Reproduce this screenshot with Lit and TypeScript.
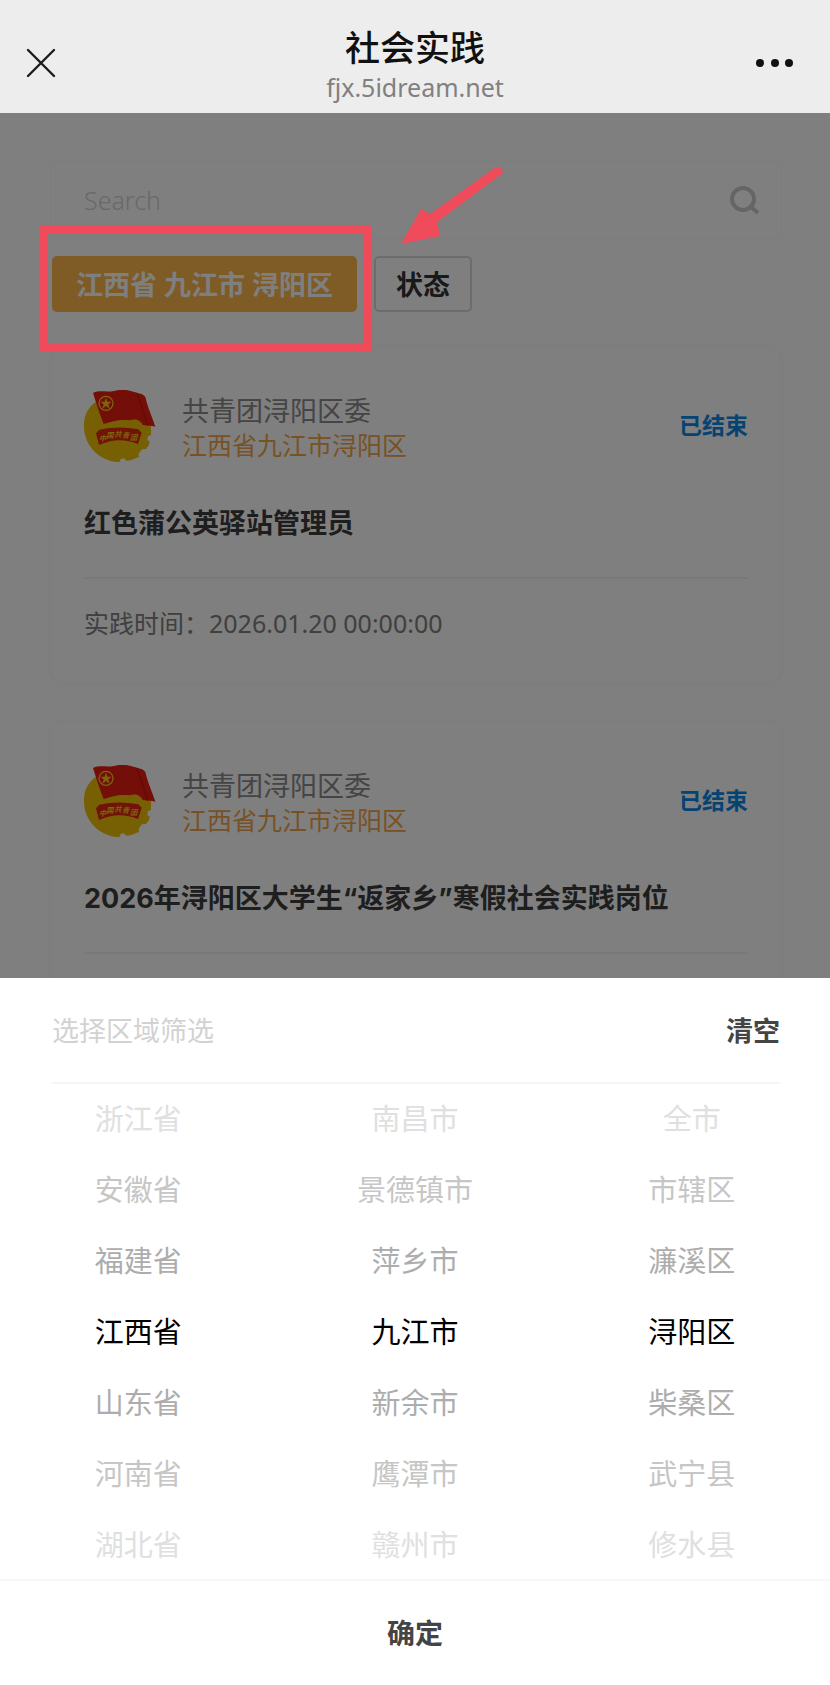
import { css, html, LitElement, nothing } from "lit";
import { customElement, property, state } from "lit/decorators.js";

const fontStack = css`"Noto Sans", "Noto Sans CJK SC", sans-serif`;

interface Practice {
    org: string;
    region: string;
    status: string;
    title: string;
    time?: string;
}

const practices: Practice[] = [
    {
        org: "共青团浔阳区委",
        region: "江西省九江市浔阳区",
        status: "已结束",
        title: "红色蒲公英驿站管理员",
        time: "2026.01.20 00:00:00",
    },
    {
        org: "共青团浔阳区委",
        region: "江西省九江市浔阳区",
        status: "已结束",
        title: "2026年浔阳区大学生“返家乡”寒假社会实践岗位",
    },
];

const columns = [
    {
        label: "省",
        items: ["浙江省", "安徽省", "福建省", "江西省", "山东省", "河南省", "湖北省"],
    },
    {
        label: "市",
        items: ["南昌市", "景德镇市", "萍乡市", "九江市", "新余市", "鹰潭市", "赣州市"],
    },
    {
        label: "区",
        items: ["全市", "市辖区", "濂溪区", "浔阳区", "柴桑区", "武宁县", "修水县"],
    },
];

@customElement("league-emblem")
export class LeagueEmblem extends LitElement {
    static styles = css`
        :host {
            display: block;
            width: 72px;
            height: 72px;
            flex: none;
        }

        .emblem {
            display: block;
            width: 100%;
            height: 100%;
        }

        .ribbon {
            font: italic bold 22px "Noto Sans CJK SC", sans-serif;
            fill: #f6c81c;
        }
    `;

    render() {
        return html`<svg class="emblem" viewBox="42 45 216 216" aria-hidden="true">
            <path
                d="M76 82 C50 100 40 130 42 158 C44 212 88 258 143 261 L150 260 L151 252 L163 250 L168 257 L182 256 L207 246 L206 236 L216 223 L228 222 L237 210 L239 199 L232 196 L234 184 L243 180 L243 152 L200 90 Z"
                fill="#efc008"
            />
            <path
                d="M69 54 C90 44 108 53 132 48 C158 40 178 46 196 52 C210 58 216 54 226 66 C234 100 246 124 256 155 C242 150 232 154 218 150 C208 130 192 132 178 136 C150 132 128 138 101 147 C94 130 86 108 69 54 Z"
                fill="#e81c10"
            />
            <path
                d="M200 54 C214 90 224 126 234 152"
                fill="none"
                stroke="#c91509"
                stroke-width="4"
            />
            <circle cx="108" cy="85" r="21" fill="none" stroke="#f6c81c" stroke-width="4" />
            <path
                d="M108 68 L112 80 L125 80 L115 88 L119 101 L108 93 L97 101 L101 88 L91 80 L104 80 Z"
                fill="#f6c81c"
            />
            <path
                d="M78 175 L88 164 Q145 151 205 163 L215 173 L204 207 Q145 183 87 210 Z"
                fill="#e3260f"
            />
            <text class="ribbon" x="87 109 133 156 180" y="198 190 187 189 195">中国共青团</text>
        </svg>`;
    }
}

@customElement("practice-card")
export class PracticeCard extends LitElement {
    static styles = css`
        :host {
            display: block;
            box-sizing: border-box;
            min-height: 338px;
            padding: 43px 33px 41px;
            border: 1px solid #fbfbfb;
            border-radius: 16px;
            box-shadow: 0 0 8px rgba(0, 0, 0, 0.03);
            background: #fff;
        }

        .head {
            display: flex;
            align-items: center;
            gap: 26px;
        }

        .names {
            flex: 1;
            padding-top: 4px;
            line-height: 34px;
        }

        .org {
            font-size: 27px;
            color: #8a8a8a;
        }

        .region {
            font-size: 25px;
            color: #f0a548;
        }

        .status {
            padding-bottom: 4px;
            font-size: 23px;
            font-weight: 700;
            color: #0a86e6;
        }

        .title {
            margin: 44px 0 0;
            padding-bottom: 35px;
            border-bottom: 2px solid #f2f2f2;
            font-family: Inter, "Noto Sans CJK SC", sans-serif;
            font-size: 27px;
            font-weight: 700;
            line-height: 36px;
            color: #3c3c3c;
        }

        .time {
            margin: 26px 0 0;
            font-size: 25px;
            line-height: 36px;
            color: #808080;
        }
    `;

    @property({ attribute: false }) practice!: Practice;

    render() {
        const { org, region, status, title, time } = this.practice;
        return html`
            <div class="head">
                <league-emblem></league-emblem>
                <div class="names">
                    <div class="org">${org}</div>
                    <div class="region">${region}</div>
                </div>
                <span class="status">${status}</span>
            </div>
            <h2 class="title">${title}</h2>
            ${time ? html`<p class="time">实践时间：${time}</p>` : nothing}
        `;
    }
}

@customElement("region-picker")
export class RegionPicker extends LitElement {
    static styles = css`
        :host {
            display: block;
            background: #fff;
        }

        button {
            padding: 0;
            border: 0;
            background: none;
            font-family: inherit;
            cursor: pointer;
        }

        .head {
            display: flex;
            align-items: center;
            justify-content: space-between;
            box-sizing: border-box;
            height: 106px;
            margin: 0 50px 0 52px;
            padding-bottom: 2px;
            border-bottom: 2px solid #f5f5f5;
            font-size: 27px;
            color: #d2d2d2;
        }

        .clear {
            font-size: 27px;
            font-weight: 700;
            color: #444;
        }

        .columns {
            display: grid;
            grid-template-columns: repeat(3, 1fr);
            height: 495px;
            overflow: hidden;
            align-content: center;
            border-bottom: 2px solid #f7f7f7;
        }

        .column {
            margin: 0;
            padding: 0;
            list-style: none;
        }

        .item {
            display: block;
            width: 100%;
            height: 71px;
            padding-bottom: 4px;
            font-size: 29px;
            color: #000;
        }

        .far-1 {
            color: #adadad;
        }

        .far-2 {
            color: #c6c6c6;
        }

        .far-3 {
            color: #e0e0e0;
        }

        .confirm {
            display: block;
            width: 100%;
            height: 104px;
            padding-bottom: 3px;
            font-size: 28px;
            font-weight: 700;
            color: #444;
        }
    `;

    @state() private selected = [3, 3, 3];

    private select(column: number, index: number) {
        this.selected = this.selected.map((old, i) => (i === column ? index : old));
    }

    render() {
        return html`
            <div class="head">
                <span>选择区域筛选</span>
                <button class="clear" type="button">清空</button>
            </div>
            <div class="columns">
                ${columns.map(
                    (column, c) => html`
                        <ul class="column" aria-label=${column.label}>
                            ${column.items.map(
                                (item, i) => html`<li>
                                    <button
                                        type="button"
                                        class="item far-${Math.min(3, Math.abs(i - this.selected[c]))}"
                                        aria-pressed=${i === this.selected[c]}
                                        @click=${() => this.select(c, i)}
                                    >
                                        ${item}
                                    </button>
                                </li>`,
                            )}
                        </ul>
                    `,
                )}
            </div>
            <button class="confirm" type="button">确定</button>
        `;
    }
}

@customElement("app-root")
export class AppRoot extends LitElement {
    static styles = css`
        :host {
            display: flex;
            flex-direction: column;
            height: 100vh;
            font-family: ${fontStack};
            background: #fff;
        }

        button {
            font-family: inherit;
            cursor: pointer;
        }

        .bar {
            display: grid;
            grid-template-columns: 1fr auto 1fr;
            align-items: center;
            flex: none;
            height: 113px;
            padding: 13px 26px 0;
            box-sizing: border-box;
            background: #ededed;
        }

        .bar-button {
            display: flex;
            padding: 0;
            border: 0;
            background: none;
        }

        .bar-button:last-child {
            justify-self: end;
            margin-right: 10px;
        }

        .heading {
            padding-top: 4px;
            text-align: center;
        }

        .heading h1 {
            margin: 0;
            font-size: 35px;
            font-weight: 500;
            line-height: 44px;
            color: #111;
        }

        .heading p {
            margin: 0;
            font-size: 25px;
            line-height: 34px;
            color: #808080;
        }

        .page {
            position: relative;
            flex: 1;
            min-height: 0;
            padding: 48px 48px 0 50px;
            overflow: hidden;
        }

        .shade {
            position: absolute;
            inset: 0;
            z-index: 1;
            background: rgba(0, 0, 0, 0.5);
        }

        .search {
            display: flex;
            align-items: center;
            height: 78px;
            padding: 0 21px 0 33px;
            box-sizing: border-box;
            border: 1px solid #f8f8f8;
            border-radius: 4px;
        }

        .search input {
            flex: 1;
            min-width: 0;
            padding: 0;
            border: 0;
            outline: 0;
            background: none;
            font: 300 25px ${fontStack};
        }

        .search input::placeholder {
            color: #d2d2d2;
            opacity: 1;
        }

        .filters {
            display: flex;
            gap: 17px;
            margin: 17px 0 34px 2px;
        }

        .marked {
            position: relative;
        }

        .chip {
            display: block;
            height: 56px;
            padding: 0 20px 2px;
            border: 2px solid #d9d9d9;
            border-radius: 5px;
            background: #fff;
            font-size: 27px;
            font-weight: 700;
            color: #333;
        }

        .chip.active {
            padding: 0 22px 2px;
            border-color: #feb64c;
            background: #feb64c;
            color: #fff;
        }

        .frame {
            position: absolute;
            inset: -31px -15px -40px -12px;
            z-index: 2;
            border: 8px solid #f04b5b;
            pointer-events: none;
        }

        .arrow {
            position: absolute;
            top: -92px;
            left: 349px;
            z-index: 2;
            pointer-events: none;
        }

        .cards {
            display: grid;
            gap: 37px;
        }
    `;

    render() {
        return html`
            <header class="bar">
                <button class="bar-button" type="button" aria-label="关闭">
                    <svg width="30" height="30" viewBox="0 0 30 30" aria-hidden="true">
                        <path
                            d="M2 2 L28 28 M28 2 L2 28"
                            stroke="#1c1c1c"
                            stroke-width="2.4"
                            stroke-linecap="round"
                        />
                    </svg>
                </button>
                <div class="heading">
                    <h1>社会实践</h1>
                    <p>fjx.5idream.net</p>
                </div>
                <button class="bar-button" type="button" aria-label="更多">
                    <svg width="38" height="10" viewBox="0 0 38 10" aria-hidden="true">
                        <circle cx="4" cy="5" r="4" fill="#111" />
                        <circle cx="19" cy="5" r="4" fill="#111" />
                        <circle cx="33" cy="5" r="4" fill="#111" />
                    </svg>
                </button>
            </header>
            <main class="page">
                <label class="search">
                    <input type="text" placeholder="Search" aria-label="Search" />
                    <svg width="30" height="30" viewBox="0 0 30 30" fill="none" aria-hidden="true">
                        <circle cx="13" cy="14" r="11" stroke="#cacaca" stroke-width="4" />
                        <path d="M20 21 L28 28" stroke="#cacaca" stroke-width="4" />
                    </svg>
                </label>
                <div class="filters">
                    <div class="marked">
                        <button class="chip active" type="button">江西省 九江市 浔阳区</button>
                        <div class="frame"></div>
                        <svg class="arrow" width="104" height="82" viewBox="0 0 104 82" aria-hidden="true">
                            <path
                                d="M95 3 Q101 2 102 9 L36 58 L39 72 L0 80 L20 45 L29 50 Z"
                                fill="#f04b5b"
                            />
                        </svg>
                    </div>
                    <button class="chip" type="button">状态</button>
                </div>
                <div class="cards">
                    ${practices.map(
                        (item) => html`<practice-card .practice=${item}></practice-card>`,
                    )}
                </div>
                <div class="shade"></div>
            </main>
            <region-picker></region-picker>
        `;
    }
}
